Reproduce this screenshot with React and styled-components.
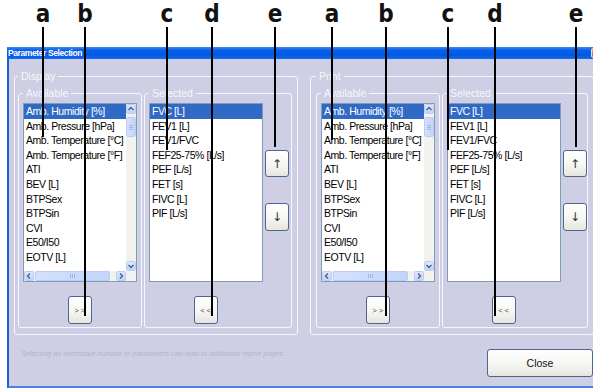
import React from "react";
import styled, { createGlobalStyle } from "styled-components";

const FONT = `"Liberation Sans", Arial, sans-serif`;

const GlobalStyle = createGlobalStyle`
  html, body {
    margin: 0;
    padding: 0;
    background: #ffffff;
  }
  body {
    font-family: ${FONT};
  }
`;

const Page = styled.div`
  position: relative;
  width: 593px;
  height: 388px;
  overflow: hidden;
  padding: 47px 0 0 7px;
  box-sizing: border-box;
`;

const Window = styled.div`
  width: 600px;
  display: flex;
  flex-direction: column;
`;

const TitleBar = styled.div`
  height: 12px;
  display: flex;
  align-items: center;
  justify-content: space-between;
  background: linear-gradient(#3a8cf6 0%, #0a5fe6 25%, #0058e4 70%, #1a6cf0 100%);
`;

const Title = styled.span`
  color: #ffffff;
  font-weight: bold;
  font-size: 8.5px;
  letter-spacing: -0.4px;
  line-height: 12px;
  padding-left: 1px;
  white-space: nowrap;
`;

const TitleClose = styled.span`
  width: 14px;
  height: 10px;
  margin-right: 2px;
  border-radius: 2px;
  background: linear-gradient(#f39a7c, #e0512a);
  border: 1px solid #f6d8cc;
  box-sizing: border-box;
`;

const Body = styled.div`
  background: #cecfe5;
  border-left: 2px solid #1a5fd8;
  border-bottom: 2px solid #4d7fe0;
  padding: 11px 11px 9px 5px;
  display: flex;
  flex-direction: column;
`;

const Groups = styled.div`
  display: flex;
  gap: 12px;
  align-items: stretch;
`;

const Group = styled.fieldset`
  margin: 0;
  min-width: 0;
  box-sizing: border-box;
  border: 1px solid #f6f6fc;
  border-radius: 3px;
  display: flex;
  gap: 2px;
  padding: ${(p) => p.$pad || "0"};
  width: ${(p) => (p.$width ? `${p.$width}px` : "auto")};
  flex: ${(p) => (p.$grow ? "1" : "none")};
`;

const Legend = styled.legend`
  font-size: 10.5px;
  line-height: 12px;
  color: #f6f6fb;
  padding: 0 3px;
  margin-left: 0;
  white-space: nowrap;
`;

const ListColumn = styled.div`
  width: 114px;
  display: flex;
  flex-direction: column;
  align-items: center;
  gap: 14px;
`;

const ListBox = styled.div`
  width: 114px;
  height: 179px;
  box-sizing: border-box;
  border: 1px solid #7f9db9;
  background: #ffffff;
  display: grid;
  grid-template-columns: ${(p) => (p.$scroll ? "1fr 10px" : "1fr")};
  grid-template-rows: ${(p) => (p.$scroll ? "1fr 10px" : "1fr")};
  overflow: hidden;
`;

const Rows = styled.div`
  overflow: hidden;
  min-width: 0;
  display: flex;
  flex-direction: column;
`;

const Row = styled.div`
  height: 14.6px;
  line-height: 14.6px;
  font-size: 10.5px;
  letter-spacing: -0.45px;
  padding-left: 2px;
  white-space: nowrap;
  color: ${(p) => (p.$active ? "#ffffff" : "#000000")};
  background: ${(p) => (p.$active ? "#316ac5" : "transparent")};
`;

const VScroll = styled.div`
  background: #f3f2ee;
  display: flex;
  flex-direction: column;
  justify-content: space-between;
`;

const HScroll = styled.div`
  background: #f3f2ee;
  display: flex;
  align-items: stretch;
  gap: 1px;
`;

const Corner = styled.div`
  background: #f3f2ee;
`;

const ScrollBtn = styled.div`
  width: 10px;
  height: 10px;
  box-sizing: border-box;
  border: 1px solid #bccdf5;
  border-radius: 2px;
  background: linear-gradient(#dde7fd, #c2d3fb);
  display: flex;
  align-items: center;
  justify-content: center;
  flex: none;
`;

const HTrack = styled.div`
  flex: 1;
  display: flex;
  padding-right: 5px;
`;

const Thumb = styled.div`
  box-sizing: border-box;
  border: 1px solid #bccdf5;
  border-radius: 2px;
  background: linear-gradient(90deg, #d4e1fd, #c3d4fb);
  display: flex;
  align-items: center;
  justify-content: center;
  flex: ${(p) => (p.$vertical ? "none" : "1")};
  height: ${(p) => (p.$vertical ? "20px" : "auto")};
`;

const VTrack = styled.div`
  flex: 1;
  padding-top: 3px;
`;

const Grip = styled.span`
  width: ${(p) => (p.$vertical ? "4px" : "1px")};
  height: ${(p) => (p.$vertical ? "1px" : "4px")};
  box-shadow: ${(p) =>
    p.$vertical
      ? "0 -2px 0 #9fb5ea, 0 2px 0 #9fb5ea"
      : "-2px 0 0 #9fb5ea, 2px 0 0 #9fb5ea"};
  background: #9fb5ea;
`;

const SideColumn = styled.div`
  width: 24px;
  display: flex;
  flex-direction: column;
  padding-top: 47px;
  gap: 26px;
`;

const Button = styled.button`
  box-sizing: border-box;
  width: ${(p) => p.$w || 24}px;
  height: ${(p) => p.$h || 28}px;
  padding: 0;
  margin: 0;
  border: 1px solid #4f6690;
  border-radius: 3px;
  background: linear-gradient(#ffffff 0%, #f5f5f1 60%, #e6e4dc 100%);
  font-family: ${FONT};
  color: #222222;
  display: flex;
  align-items: center;
  justify-content: center;
  flex: none;
`;

const MoveText = styled.span`
  font-size: 8px;
  letter-spacing: 1.5px;
  color: #555555;
  padding-left: 1px;
`;

const ArrowText = styled.span`
  font-family: "DejaVu Sans", sans-serif;
  font-size: 12px;
  color: #333333;
`;

const CloseText = styled.span`
  font-size: 10.5px;
  color: #111111;
`;

const Footer = styled.div`
  display: flex;
  justify-content: space-between;
  align-items: flex-start;
  margin-top: 14px;
  padding-right: 3px;
`;

const Hint = styled.span`
  font-style: italic;
  font-size: 7.3px;
  line-height: 10px;
  color: #b3b4cc;
  padding-left: 7px;
  white-space: nowrap;
`;

const MarkLetter = styled.span`
  position: absolute;
  top: 3px;
  transform: translateX(-50%);
  font-family: "DejaVu Sans Condensed", "DejaVu Sans", sans-serif;
  font-weight: bold;
  font-size: 24px;
  line-height: 22px;
  color: #111111;
`;

const MarkLine = styled.span`
  position: absolute;
  top: 27px;
  width: 2px;
  background: #000000;
`;

const Caret = ({ dir }) => {
  const paths = {
    up: "M1.5 5 L4 2.5 L6.5 5",
    down: "M1.5 3 L4 5.5 L6.5 3",
    left: "M5 1.5 L2.5 4 L5 6.5",
    right: "M3 1.5 L5.5 4 L3 6.5",
  };
  return (
    <svg width="8" height="8" viewBox="0 0 8 8">
      <path d={paths[dir]} fill="none" stroke="#4d6185" strokeWidth="1.4" />
    </svg>
  );
};

const available = [
  "Amb. Humidity [%]",
  "Amb. Pressure [hPa]",
  "Amb. Temperature [°C]",
  "Amb. Temperature [°F]",
  "ATI",
  "BEV [L]",
  "BTPSex",
  "BTPSin",
  "CVI",
  "E50/I50",
  "EOTV [L]",
];

const selected = [
  "FVC [L]",
  "FEV1 [L]",
  "FEV1/FVC",
  "FEF25-75% [L/s]",
  "PEF [L/s]",
  "FET [s]",
  "FIVC [L]",
  "PIF [L/s]",
];

const markers = [
  { l: "a", x: 43, end: 137 },
  { l: "b", x: 85, end: 316 },
  { l: "c", x: 167, end: 150 },
  { l: "d", x: 212, end: 316 },
  { l: "e", x: 275, end: 147 },
  { l: "a", x: 332, end: 140 },
  { l: "b", x: 386, end: 316 },
  { l: "c", x: 448, end: 150 },
  { l: "d", x: 495, end: 316 },
  { l: "e", x: 576, end: 147 },
];

const Panel = ({ title, left }) => (
  <Group $width={284} $pad={`5px 5px 6px ${left}px`}>
    <Legend>{title}</Legend>
    <Group $width={124} $pad="4px 4px 3px 4px">
      <Legend>Available</Legend>
      <ListColumn>
        <ListBox $scroll>
          <Rows>
            {available.map((item, i) => (
              <Row key={item} $active={i === 0}>
                {item}
              </Row>
            ))}
          </Rows>
          <VScroll>
            <ScrollBtn>
              <Caret dir="up" />
            </ScrollBtn>
            <VTrack>
              <Thumb $vertical>
                <Grip $vertical />
              </Thumb>
            </VTrack>
            <ScrollBtn>
              <Caret dir="down" />
            </ScrollBtn>
          </VScroll>
          <HScroll>
            <ScrollBtn>
              <Caret dir="left" />
            </ScrollBtn>
            <HTrack>
              <Thumb>
                <Grip />
              </Thumb>
            </HTrack>
            <ScrollBtn>
              <Caret dir="right" />
            </ScrollBtn>
          </HScroll>
          <Corner />
        </ListBox>
        <Button>
          <MoveText>&gt;&gt;</MoveText>
        </Button>
      </ListColumn>
    </Group>
    <Group $grow $pad="4px 3px 3px 4px">
      <Legend>Selected</Legend>
      <ListColumn>
        <ListBox>
          <Rows>
            {selected.map((item, i) => (
              <Row key={item} $active={i === 0}>
                {item}
              </Row>
            ))}
          </Rows>
        </ListBox>
        <Button>
          <MoveText>&lt;&lt;</MoveText>
        </Button>
      </ListColumn>
      <SideColumn>
        <Button $h={27}>
          <ArrowText>↑</ArrowText>
        </Button>
        <Button $h={28}>
          <ArrowText>↓</ArrowText>
        </Button>
      </SideColumn>
    </Group>
  </Group>
);

const App = () => (
  <>
    <GlobalStyle />
    <Page>
      <Window>
        <TitleBar>
          <Title>Parameter Selection</Title>
          <TitleClose />
        </TitleBar>
        <Body>
          <Groups>
            <Panel title="Display" left={3} />
            <Panel title="Print" left={5} />
          </Groups>
          <Footer>
            <Hint>
              Selecting an excessive number of parameters can lead to additional
              report pages.
            </Hint>
            <Button $w={106} $h={28}>
              <CloseText>Close</CloseText>
            </Button>
          </Footer>
        </Body>
      </Window>
      {markers.map((m, i) => (
        <React.Fragment key={i}>
          <MarkLetter style={{ left: m.x }}>{m.l}</MarkLetter>
          <MarkLine style={{ left: m.x - 1, height: m.end - 27 }} />
        </React.Fragment>
      ))}
    </Page>
  </>
);

export default App;
